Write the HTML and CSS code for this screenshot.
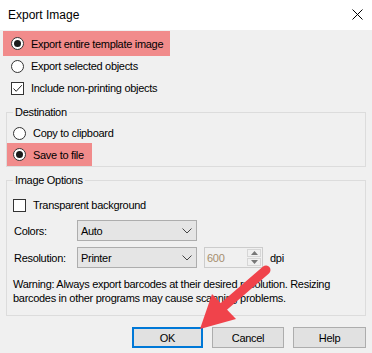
FILE: index.html
```html
<!DOCTYPE html>
<html>
<head>
<meta charset="utf-8">
<title>Export Image</title>
<link rel="stylesheet" href="styles.css">
</head>
<body>
<div class="window">
  <div class="titlebar">
    <span class="title">Export Image</span>
    <svg class="close" width="11" height="11" viewBox="0 0 11 11"><path d="M0.5 0.5L10.5 10.5M10.5 0.5L0.5 10.5" stroke="#000" stroke-width="1" fill="none"/></svg>
  </div>
  <div class="content">
    <div class="opt hl first"><span class="radio checked"></span><span>Export entire template image</span></div>
    <div class="opt second"><span class="radio"></span><span>Export selected objects</span></div>
    <div class="opt"><span class="check"><svg width="11" height="11" viewBox="0 0 11 11"><path d="M1.5 5.5L4.2 8.3L9.8 2.2" stroke="#222" stroke-width="1" fill="none"/></svg></span><span>Include non-printing objects</span></div>

    <fieldset class="group dest">
      <legend>Destination</legend>
      <div class="opt in"><span class="radio"></span><span>Copy to clipboard</span></div>
      <div class="opt in hl save"><span class="radio checked"></span><span>Save to file</span></div>
    </fieldset>

    <fieldset class="group imgopt">
      <legend>Image Options</legend>
      <div class="opt in trans"><span class="check"></span><span>Transparent background</span></div>
      <div class="field colors">
        <span class="label">Colors:</span>
        <div class="select"><span>Auto</span><svg class="chev" width="10" height="6" viewBox="0 0 10 6"><path d="M0.5 0.5L5 5L9.5 0.5" stroke="#444" stroke-width="1" fill="none"/></svg></div>
      </div>
      <div class="field res">
        <span class="label">Resolution:</span>
        <div class="select"><span>Printer</span><svg class="chev" width="10" height="6" viewBox="0 0 10 6"><path d="M0.5 0.5L5 5L9.5 0.5" stroke="#444" stroke-width="1" fill="none"/></svg></div>
        <div class="spin">
          <span class="val">600</span>
          <div class="spinbtns">
            <span class="sb"><svg width="7" height="4" viewBox="0 0 7 4"><path d="M3.5 0L7 4H0Z" fill="#777"/></svg></span>
            <span class="sb"><svg width="7" height="4" viewBox="0 0 7 4"><path d="M0 0H7L3.5 4Z" fill="#777"/></svg></span>
          </div>
        </div>
        <span class="unit">dpi</span>
      </div>
      <p class="warn">Warning: Always export barcodes at their desired resolution. Resizing<br>barcodes in other programs may cause scanning problems.</p>
    </fieldset>

    <div class="buttons">
      <button class="btn ok">OK</button>
      <button class="btn cancel">Cancel</button>
      <button class="btn help">Help</button>
    </div>
  </div>

  <svg class="arrow" width="372" height="353" viewBox="0 0 372 353">
    <line x1="266" y1="270" x2="222" y2="308" stroke="#f0434b" stroke-width="9" stroke-linecap="round"/>
    <polygon points="200,329 212,294 236,319" fill="#f0434b"/>
  </svg>
</div>
</body>
</html>
```

FILE: styles.css
```css
* { box-sizing: border-box; }
html, body { margin: 0; padding: 0; }
body { background: #f0f0f0; }

.window {
  position: relative;
  width: 372px;
  height: 353px;
  overflow: hidden;
  background: #f0f0f0;
  color: #000;
  font-family: "Liberation Sans", Arial, sans-serif;
  font-size: 11px;
  letter-spacing: -0.3px;
}

.titlebar {
  height: 30px;
  background: #fff;
  display: flex;
  align-items: center;
  justify-content: space-between;
  padding: 0 9px 0 8px;
  font-size: 12px;
  letter-spacing: 0;
}
.close { display: block; margin-top: -1px; }

.content { padding-top: 1px; }

.opt {
  display: flex;
  align-items: center;
  gap: 7px;
  height: 22px;
  padding-left: 11px;
  white-space: nowrap;
}
.hl { background: #f18b8b; width: fit-content; }
.first { margin-left: 3px; padding-left: 8px; padding-right: 7px; height: 25px; }
.second { margin-top: -1px; }

.radio {
  width: 13px;
  height: 13px;
  flex: none;
  border: 1px solid #333;
  border-radius: 50%;
  background: #fff;
  display: flex;
  align-items: center;
  justify-content: center;
}
.radio.checked::after {
  content: "";
  width: 7px;
  height: 7px;
  border-radius: 50%;
  background: #1b1b1b;
}
.check {
  width: 13px;
  height: 13px;
  flex: none;
  border: 1px solid #333;
  background: #fff;
  display: flex;
}
.check svg { display: block; }

.group {
  margin: 5px 6px 0 6px;
  padding: 0;
  border: 1px solid #dcdcdc;
  min-width: 0;
}
.group legend {
  margin-left: 6px;
  padding: 0 2px;
  line-height: 16px;
}
.opt.in { padding-left: 6px; }

.dest { padding-top: 2px; }
.save { margin-top: -1px; height: 23px; padding-right: 8px; }

.imgopt { padding-top: 6px; padding-bottom: 10px; }

.field {
  display: flex;
  align-items: center;
  padding-left: 7px;
  height: 21px;
}
.colors { margin-top: 4px; }
.res { margin-top: 6px; }
.label { width: 63px; flex: none; }

.select {
  width: 120px;
  height: 21px;
  background: #e5e5e5;
  border: 1px solid #adadad;
  display: flex;
  align-items: center;
  justify-content: space-between;
  padding: 0 4px 0 3px;
}
.chev { display: block; margin-top: 1px; }

.spin {
  margin-left: 7px;
  width: 59px;
  height: 21px;
  border: 1px solid #cccccc;
  background: #f0f0f0;
  display: flex;
  align-items: center;
  justify-content: space-between;
  padding: 0 1px 0 2px;
}
.val { color: #a58e6e; }
.spinbtns {
  display: flex;
  flex-direction: column;
  gap: 1px;
  width: 14px;
  height: 17px;
}
.sb {
  flex: 1;
  border: 1px solid #d6d6d6;
  display: flex;
  align-items: center;
  justify-content: center;
}
.sb svg { display: block; }
.unit { margin-left: 7px; }

.warn {
  margin: 9px 0 0 0;
  padding-left: 6px;
  line-height: 14px;
  white-space: nowrap;
}

.buttons {
  display: flex;
  justify-content: flex-end;
  gap: 9px;
  padding-right: 6px;
  margin-top: 11px;
}
.btn {
  height: 21px;
  background: #e1e1e1;
  border: 1px solid #adadad;
  font: inherit;
  letter-spacing: inherit;
  color: #000;
  padding: 0;
  margin: 0;
}
.ok { width: 71px; border: 2px solid #0078d7; }
.cancel { width: 72px; }
.help { width: 73px; }

.arrow {
  position: absolute;
  left: 0;
  top: 0;
  pointer-events: none;
}
```
